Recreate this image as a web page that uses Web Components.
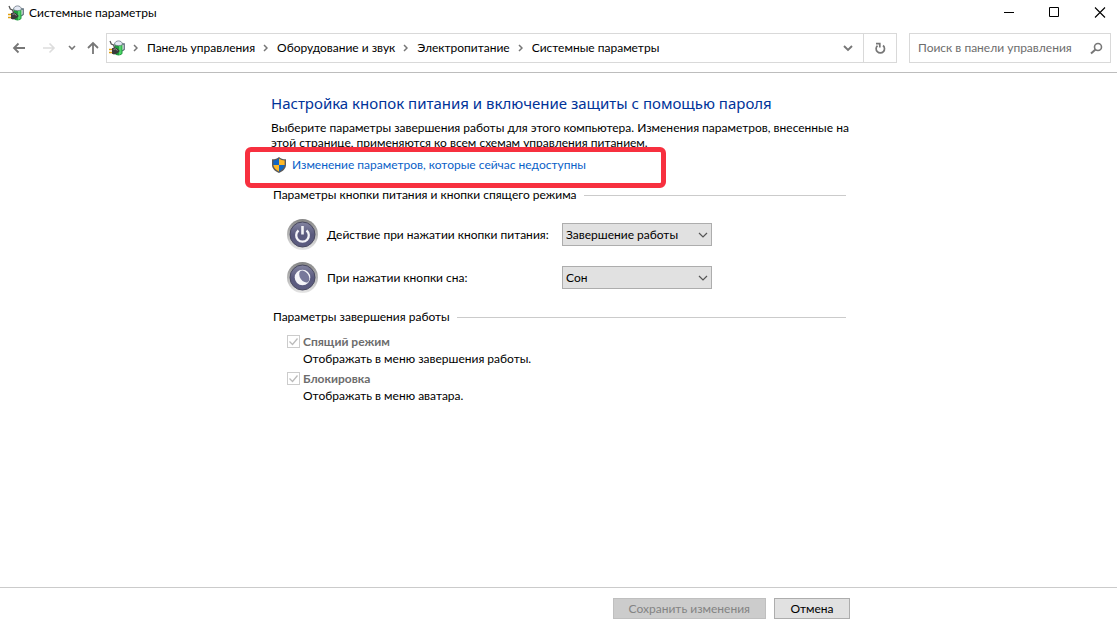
<!DOCTYPE html>
<html lang="ru">
<head>
<meta charset="utf-8">
<title>Системные параметры</title>
<style>
    html, body {
        height: 100%;
        margin: 0;
    }

    body {
        font: 12px/16px Lato, "Open Sans", sans-serif;
        color: #000;
        background: #fff;
        --line: #d9d9d9;
        --rule: #cbcbcb;
    }
</style>
</head>
<body>
<system-window></system-window>

<script>
const batteryIcon = `
    <svg width="16" height="16" viewBox="0 0 16 16" aria-hidden="true">
        <path d="M12.500 4h2.700v5.500l-2 1.500" fill="none" stroke="#5b6a78" stroke-width="1.300"/>
        <path d="M5.500 3.500v10c1.500 2.500 6.500 2.500 8 0v-10z" fill="#1f9a3c"/>
        <path d="M10 4h2.500v9.500L10 15z" fill="#4fd468"/>
        <path d="M5.500 4.500C5.500-.3 13.500-.3 13.500 4.500c-2 1.500-6 1.500-8 0z" fill="#e4e9f4" stroke="#6f7a88" stroke-width=".8"/>
        <path d="M1 1l1.300 3 2.200 1 1.200 3" fill="none" stroke="#555" stroke-width="1.300"/>
        <path d="M0 9.500h4M0 12.500h4" stroke="#e0a010" stroke-width="1.600"/>
        <path d="M3 8.300 5 7.500l3 .8 2.800 2.700L8 13.500l-3 1-2-.8z" fill="#3a3a3a"/>
        <path d="M4.500 9.300l2-.4 2 1.600" fill="none" stroke="#9a9a9a"/>
    </svg>`;

class TitleBar extends HTMLElement {
    constructor() {
        super();
        this.attachShadow({ mode: 'open' });
    }

    connectedCallback() {
        this.shadowRoot.innerHTML = `
            <style>
                :host {
                    display: flex;
                    align-items: center;
                    height: 25px;
                    padding-left: 8px;
                    gap: 5px;
                }

                h1 {
                    flex: 1;
                    margin: 0;
                    font: inherit;
                }

                .controls {
                    display: flex;
                    gap: 12px;
                }

                button {
                    display: grid;
                    place-items: center;
                    width: 34px;
                    height: 25px;
                    padding: 0;
                    border: 0;
                    background: none;
                }

                svg {
                    display: block;
                }
            </style>
            ${batteryIcon}
            <h1><slot></slot></h1>
            <div class="controls">
                <button aria-label="Свернуть"><svg width="12" height="12"><path d="M2 5.500h10" stroke="#000"/></svg></button>
                <button aria-label="Развернуть"><svg width="12" height="12"><path d="M1.500.500h9v9h-9z" fill="none" stroke="#000"/></svg></button>
                <button aria-label="Закрыть"><svg width="12" height="12"><path d="M1 .5l10 10M11 .5l-10 10" stroke="#000" stroke-width="1.100"/></svg></button>
            </div>
        `;
    }
}

class NavBar extends HTMLElement {
    constructor() {
        super();
        this.attachShadow({ mode: 'open' });
    }

    connectedCallback() {
        const crumbs = ['Панель управления', 'Оборудование и звук', 'Электропитание', 'Системные параметры'];

        this.shadowRoot.innerHTML = `
            <style>
                :host {
                    display: flex;
                    align-items: center;
                    padding: 8px 6px 9px 12px;
                    border-bottom: 1px solid #bdbdbd;
                }

                svg {
                    display: block;
                }

                button {
                    display: grid;
                    place-items: center;
                    padding: 0;
                    border: 0;
                    background: none;
                }

                .history {
                    display: flex;
                    align-items: center;
                    margin-right: 6px;
                }

                .forward {
                    margin: 0 11px 0 16px;
                }

                .up {
                    margin-left: 9px;
                }

                .address {
                    flex: 1;
                    display: flex;
                    box-sizing: border-box;
                    height: 30px;
                    border: 1px solid var(--line);
                }

                ol {
                    flex: 1;
                    display: flex;
                    align-items: center;
                    margin: 0;
                    padding: 0 0 0 2px;
                    list-style: none;
                }

                li {
                    display: flex;
                    align-items: center;
                    white-space: nowrap;
                }

                li svg {
                    margin: 0 9px 0 8px;
                }

                ol > svg {
                    flex: none;
                }

                a {
                    color: inherit;
                    text-decoration: none;
                }

                .drop {
                    width: 30px;
                }

                .refresh {
                    width: 33px;
                    border-left: 1px solid var(--line);
                }

                .search {
                    display: flex;
                    align-items: center;
                    box-sizing: border-box;
                    width: 202px;
                    height: 30px;
                    margin-left: 12px;
                    padding: 0 7px 0 8px;
                    border: 1px solid var(--line);
                }

                input {
                    flex: 1;
                    min-width: 0;
                    padding: 0;
                    border: 0;
                    outline: 0;
                    font: inherit;
                    background: none;
                }

                input::placeholder {
                    color: #6d6d6d;
                    opacity: 1;
                }
            </style>
            <div class="history">
                <button aria-label="Назад"><svg width="14" height="14"><path d="M13 7H2M6.500 2.500 2 7l4.500 4.500" fill="none" stroke="#777" stroke-width="1.800"/></svg></button>
                <button class="forward" aria-label="Вперед" disabled><svg width="14" height="14"><path d="M1 7h11M7.500 2.500 12 7l-4.500 4.500" fill="none" stroke="#ddd" stroke-width="1.600"/></svg></button>
                <button aria-label="Последние расположения"><svg width="10" height="8"><path d="M2 2l3 3 3-3" fill="none" stroke="#777" stroke-width="1.600"/></svg></button>
                <button class="up" aria-label="Вверх"><svg width="14" height="14"><path d="M7 13V2M2 7l5-5 5 5" fill="none" stroke="#777" stroke-width="1.800"/></svg></button>
            </div>
            <nav class="address">
                <ol>
                    ${batteryIcon}
                    ${crumbs.map(crumb => `
                        <li>
                            <svg width="5" height="8"><path d="M1 1l3 3-3 3" fill="none" stroke="#777" stroke-width="1.500"/></svg>
                            <a href="#">${crumb}</a>
                        </li>`).join('')}
                </ol>
                <button class="drop" aria-label="Предыдущие расположения"><svg width="10" height="8"><path d="M1 2l4 4 4-4" fill="none" stroke="#777" stroke-width="1.900"/></svg></button>
                <button class="refresh" aria-label="Обновить"><svg width="12" height="12"><path d="M9 3.500A4.200 4.200 0 1 1 3.500 3.600M2 1.700h3.800v3.800" fill="none" stroke="#777" stroke-width="1.700"/></svg></button>
            </nav>
            <div class="search">
                <input type="text" placeholder="Поиск в панели управления" aria-label="Поиск в панели управления">
                <svg width="13" height="13"><circle cx="8" cy="5" r="3.500" fill="none" stroke="#777" stroke-width="1.600"/><path d="M5.500 7.500 1 11.500" stroke="#777" stroke-width="2"/></svg>
            </div>
        `;
    }
}

// Link with the UAC shield, framed by a red marker
class ShieldLink extends HTMLElement {
    constructor() {
        super();
        this.attachShadow({ mode: 'open' });
    }

    connectedCallback() {
        this.shadowRoot.innerHTML = `
            <style>
                :host {
                    display: flex;
                    position: relative;
                }

                :host::after {
                    content: "";
                    position: absolute;
                    inset: -10px auto auto -26px;
                    box-sizing: border-box;
                    width: 421px;
                    height: 41px;
                    border: 5px solid #f7303f;
                    border-radius: 6px;
                    pointer-events: none;
                }

                a {
                    display: flex;
                    align-items: center;
                    gap: 5px;
                    color: #0a5fc8;
                    text-decoration: none;
                }
            </style>
            <a href="#">
                <svg width="16" height="16" viewBox="0 0 16 16" aria-hidden="true">
                    <path d="M8 0C6.500 1.500 4 2.300 1 2.300V8c0 3.500 3 6.300 7 8 4-1.700 7-4.500 7-8V2.300C12 2.300 9.500 1.500 8 0z" fill="#5a5a5a"/>
                    <path d="M8 1.600V8H2.400V3.600C4.500 3.500 6.500 2.900 8 1.600z" fill="#0f66c4"/>
                    <path d="M8 1.600V8h5.600V3.600C11.500 3.500 9.500 2.900 8 1.600z" fill="#fdb827"/>
                    <path d="M8 8v6.500C5 13 2.600 11 2.400 8z" fill="#fdb827"/>
                    <path d="M8 8v6.500c3-1.500 5.400-3.500 5.600-6.500z" fill="#0f66c4"/>
                </svg>
                <slot></slot>
            </a>
        `;
    }
}

class SettingsGroup extends HTMLElement {
    constructor() {
        super();
        this.attachShadow({ mode: 'open' });
    }

    connectedCallback() {
        this.shadowRoot.innerHTML = `
            <style>
                :host {
                    display: block;
                    margin: 0 4px 0 2px;
                }

                h3 {
                    display: flex;
                    align-items: center;
                    gap: 7px;
                    margin: 0;
                    font: inherit;
                }

                h3::after {
                    content: "";
                    flex: 1;
                    height: 1px;
                    background: var(--rule);
                }

                .items {
                    display: flex;
                    flex-direction: column;
                    padding-left: 14px;
                }
            </style>
            <h3>${this.getAttribute('heading')}</h3>
            <div class="items"><slot></slot></div>
        `;
    }
}

class ActionRow extends HTMLElement {
    constructor() {
        super();
        this.attachShadow({ mode: 'open' });
    }

    connectedCallback() {
        const glyphs = {
            power: '<path d="M11.500 11.500a6.300 6.300 0 1 0 8 0" fill="none" stroke="#f4f4f8" stroke-width="2.300"/><path d="M15.500 7v8.500" stroke="#f4f4f8" stroke-width="2.600"/>',
            sleep: '<circle cx="15.500" cy="15.500" r="7.800" fill="#f4f4f8"/><ellipse cx="17.300" cy="14.500" rx="4.200" ry="6.600" transform="rotate(-35 17.300 14.500)" fill="#77789a"/>'
        };

        this.shadowRoot.innerHTML = `
            <style>
                :host {
                    display: flex;
                    align-items: center;
                    height: 43px;
                }

                svg {
                    flex: none;
                }

                label {
                    width: 243px;
                    padding-left: 8px;
                    box-sizing: border-box;
                }

                .combo {
                    display: grid;
                    align-items: center;
                    width: 150px;
                }

                .combo > * {
                    grid-area: 1 / 1;
                }

                .combo svg {
                    justify-self: end;
                    margin-right: 4px;
                    pointer-events: none;
                }

                select {
                    appearance: none;
                    width: 100%;
                    height: 23px;
                    padding: 0 20px 0 3px;
                    border: 1px solid #adadad;
                    border-radius: 0;
                    background: #e1e1e1;
                    color: inherit;
                    font: inherit;
                }
            </style>
            <svg width="32" height="32" viewBox="0 0 32 32" aria-hidden="true">
                <defs>
                    <linearGradient id="rim" x2="0" y2="1">
                        <stop offset="0" stop-color="#858585"/>
                        <stop offset="1" stop-color="#e6e6e6"/>
                    </linearGradient>
                    <linearGradient id="face" x2="0" y2="1">
                        <stop offset="0" stop-color="#8586a2"/>
                        <stop offset=".5" stop-color="#5a5a7e"/>
                        <stop offset="1" stop-color="#5c5c80"/>
                    </linearGradient>
                </defs>
                <circle cx="15.500" cy="15.500" r="15.500" fill="url(#rim)"/>
                <circle cx="15.500" cy="15.500" r="12.500" fill="url(#face)" stroke="#48485f"/>
                ${glyphs[this.getAttribute('icon')]}
            </svg>
            <label for="action"><slot></slot></label>
            <div class="combo">
                <select id="action"><option>${this.getAttribute('value')}</option></select>
                <svg width="10" height="8"><path d="M1 2l4 4 4-4" fill="none" stroke="#555" stroke-width="1.200"/></svg>
            </div>
        `;
    }
}

class ShutdownOption extends HTMLElement {
    constructor() {
        super();
        this.attachShadow({ mode: 'open' });
    }

    connectedCallback() {
        this.shadowRoot.innerHTML = `
            <style>
                :host {
                    display: grid;
                    grid-template-columns: 13px 1fr;
                    column-gap: 3px;
                    align-items: center;
                    margin-bottom: 3px;
                }

                .box {
                    display: grid;
                }

                .box > * {
                    grid-area: 1 / 1;
                }

                input {
                    appearance: none;
                    width: 13px;
                    height: 13px;
                    margin: 0;
                    border: 1px solid #ccc;
                    background: #fff;
                }

                svg {
                    pointer-events: none;
                }

                label {
                    font-weight: 700;
                    line-height: 17px;
                    color: #6d6d6d;
                }

                p {
                    grid-column: 2;
                    margin: 0;
                    line-height: 17px;
                }
            </style>
            <span class="box">
                <input type="checkbox" id="option" aria-describedby="hint" checked disabled>
                <svg width="13" height="13"><path d="M2.500 6.500l3 3 5-6" fill="none" stroke="#bbb" stroke-width="1.300"/></svg>
            </span>
            <label for="option">${this.getAttribute('label')}</label>
            <p id="hint"><slot></slot></p>
        `;
    }
}

class FooterBar extends HTMLElement {
    constructor() {
        super();
        this.attachShadow({ mode: 'open' });
    }

    connectedCallback() {
        this.shadowRoot.innerHTML = `
            <style>
                :host {
                    display: block;
                    padding: 10px 0 7px;
                    border-top: 1px solid var(--rule);
                }

                .buttons {
                    display: flex;
                    justify-content: flex-end;
                    gap: 8px;
                    max-width: 583px;
                    margin: 0 auto;
                }

                button {
                    height: 21px;
                    min-width: 76px;
                    padding: 0 15px;
                    border: 1px solid #adadad;
                    background: #e1e1e1;
                    color: #000;
                    font: inherit;
                }

                button:disabled {
                    border-color: #bfbfbf;
                    background: #ccc;
                    color: #838383;
                }
            </style>
            <div class="buttons">
                <button disabled>Сохранить изменения</button>
                <button>Отмена</button>
            </div>
        `;
    }
}

class SystemWindow extends HTMLElement {
    constructor() {
        super();
        this.attachShadow({ mode: 'open' });
    }

    connectedCallback() {
        this.shadowRoot.innerHTML = `
            <style>
                :host {
                    display: flex;
                    flex-direction: column;
                    min-height: 100%;
                }

                main {
                    flex: 1;
                    box-sizing: border-box;
                    width: 100%;
                    max-width: 583px;
                    margin: 0 auto;
                    padding: 19px 0 0 4px;
                }

                h2 {
                    margin: 0 0 6px;
                    font: 400 15px/22px "Noto Sans", sans-serif;
                    color: #003399;
                }

                p {
                    margin: 0 0 7px;
                    line-height: 15px;
                }

                shield-link {
                    margin-bottom: 14px;
                }

                .actions {
                    padding: 10px 0;
                }

                .options {
                    padding-top: 8px;
                }
            </style>
            <title-bar>Системные параметры</title-bar>
            <nav-bar></nav-bar>
            <main>
                <h2>Настройка кнопок питания и включение защиты с помощью пароля</h2>
                <p>Выберите параметры завершения работы для этого компьютера. Изменения параметров, внесенные на этой странице, применяются ко всем схемам управления питанием.</p>
                <shield-link>Изменение параметров, которые сейчас недоступны</shield-link>
                <settings-group heading="Параметры кнопки питания и кнопки спящего режима">
                    <div class="actions">
                        <action-row icon="power" value="Завершение работы">Действие при нажатии кнопки питания:</action-row>
                        <action-row icon="sleep" value="Сон">При нажатии кнопки сна:</action-row>
                    </div>
                </settings-group>
                <settings-group heading="Параметры завершения работы">
                    <div class="options">
                        <shutdown-option label="Спящий режим">Отображать в меню завершения работы.</shutdown-option>
                        <shutdown-option label="Блокировка">Отображать в меню аватара.</shutdown-option>
                    </div>
                </settings-group>
            </main>
            <footer-bar></footer-bar>
        `;
    }
}

customElements.define('title-bar', TitleBar);
customElements.define('nav-bar', NavBar);
customElements.define('shield-link', ShieldLink);
customElements.define('settings-group', SettingsGroup);
customElements.define('action-row', ActionRow);
customElements.define('shutdown-option', ShutdownOption);
customElements.define('footer-bar', FooterBar);
customElements.define('system-window', SystemWindow);
</script>
</body>
</html>
